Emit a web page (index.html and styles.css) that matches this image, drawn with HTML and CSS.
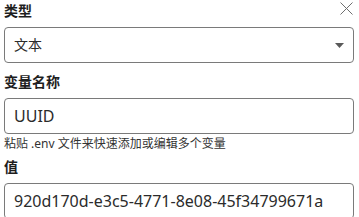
FILE: index.html
```html
<!DOCTYPE html>
<html lang="zh-CN">
<head>
<meta charset="utf-8">
<link rel="stylesheet" href="styles.css">
</head>
<body>
<div class="panel">
  <div class="head">
    <label class="label">类型</label>
    <button class="close" aria-label="关闭">
      <svg width="13" height="13" viewBox="0 0 13 13"><path d="M0.5 0.5L12.5 12.5M12.5 0.5L0.5 12.5" stroke="#6e6e6e" stroke-width="1" fill="none"/></svg>
    </button>
  </div>
  <div class="field select">
    <span class="value cjk">文本</span>
    <svg class="caret" width="9" height="5" viewBox="0 0 9 5"><path d="M0 0H9L4.5 5Z" fill="#5a5a5a"/></svg>
  </div>
  <label class="label gap">变量名称</label>
  <div class="field"><span class="value">UUID</span></div>
  <p class="hint">粘贴 .env 文件来快速添加或编辑多个变量</p>
  <label class="label gap2">值</label>
  <div class="field"><span class="value">920d170d-e3c5-4771-8e08-45f34799671a</span></div>
</div>
</body>
</html>
```
FILE: styles.css
```css
* { box-sizing: border-box; }
html, body { margin: 0; padding: 0; background: #fff; }
body {
  font-family: "Noto Sans", "Noto Sans CJK SC", sans-serif;
  color: #222;
  overflow: hidden;
}
.panel {
  display: flex;
  flex-direction: column;
  padding: 1px 5px 0 4px;
}
.head {
  display: flex;
  justify-content: space-between;
  align-items: flex-start;
}
.label {
  font-size: 14px;
  font-weight: 700;
  line-height: 20px;
  color: #1e1e1e;
}
.close {
  border: 0;
  background: none;
  padding: 0;
  margin: 1px 1px 0 0;
  width: 13px;
  height: 13px;
  display: flex;
}
.field {
  margin-top: 6px;
  height: 36px;
  border: 1px solid #7a7a7a;
  border-radius: 4px;
  display: flex;
  align-items: center;
  padding: 0 9px 0 9px;
  font-size: 16px;
  color: #2b2b2b;
}
.select { justify-content: space-between; }
.value { line-height: 20px; }
.cjk { font-size: 14px; }
.caret { display: block; }
.gap { margin-top: 9px; }
.gap2 { margin-top: 5px; }
.hint {
  margin: 2px 0 0 0;
  font-size: 12px;
  line-height: 16px;
  color: #333;
}
```
